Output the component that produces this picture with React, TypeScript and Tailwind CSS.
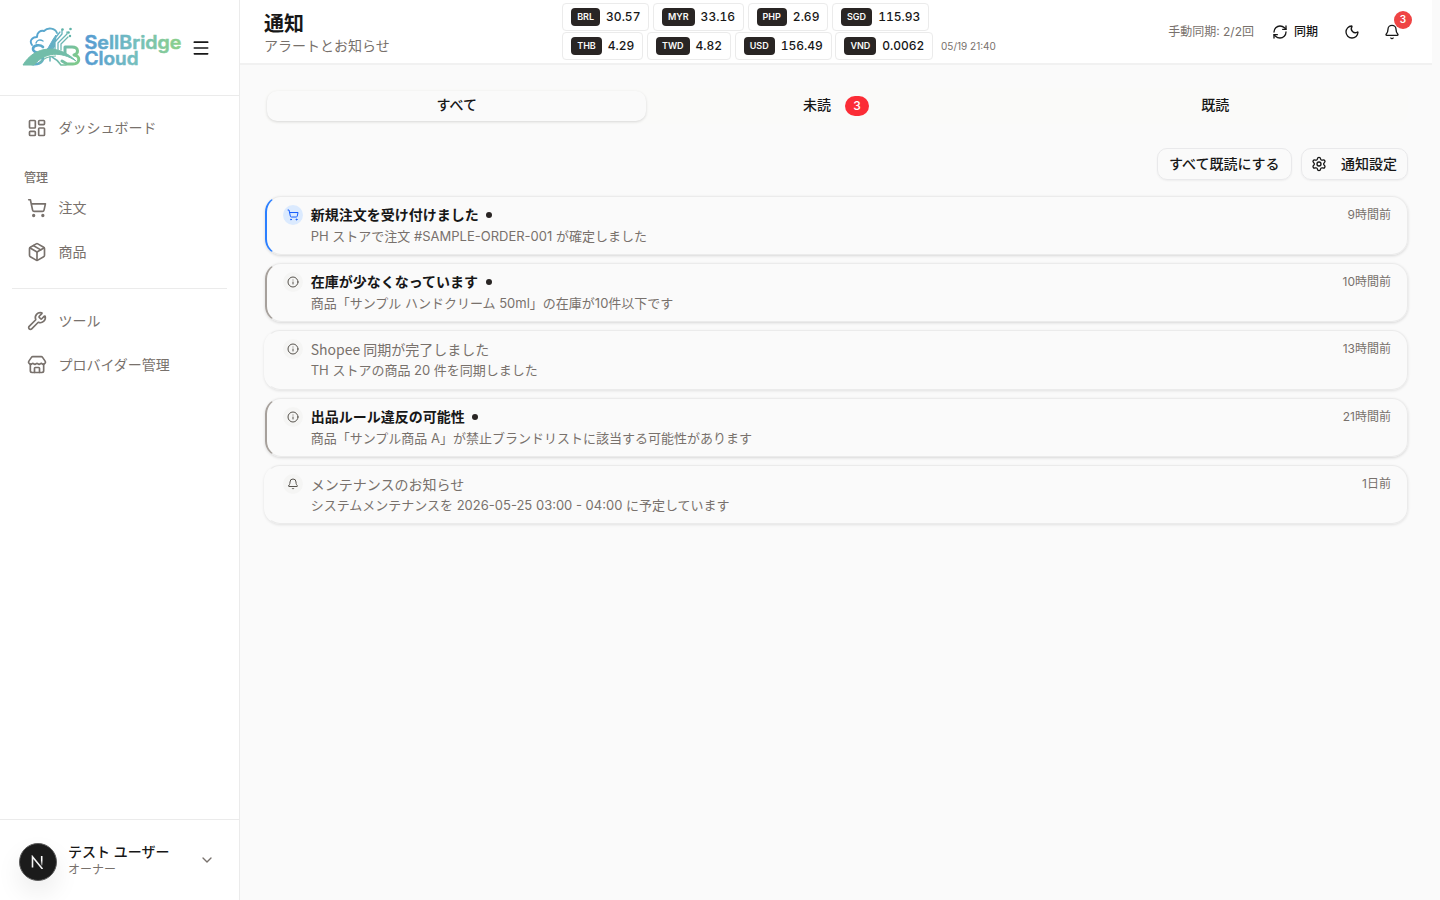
import {
  Bell,
  ChevronDown,
  Info,
  LayoutDashboard,
  Menu,
  Moon,
  Package,
  RefreshCw,
  Settings,
  ShoppingCart,
  Store,
  Wrench,
  type LucideIcon,
} from "lucide-react";

const rateRows = [
  [
    ["BRL", "30.57"],
    ["MYR", "33.16"],
    ["PHP", "2.69"],
    ["SGD", "115.93"],
  ],
  [
    ["THB", "4.29"],
    ["TWD", "4.82"],
    ["USD", "156.49"],
    ["VND", "0.0062"],
  ],
];

type Notice = {
  title: string;
  body: string;
  time: string;
  unread: boolean;
  kind: "order" | "info" | "system";
};

const notices: Notice[] = [
  { title: "新規注文を受け付けました", body: "PH ストアで注文 #SAMPLE-ORDER-001 が確定しました", time: "9時間前", unread: true, kind: "order" },
  { title: "在庫が少なくなっています", body: "商品「サンプル ハンドクリーム 50ml」の在庫が10件以下です", time: "10時間前", unread: true, kind: "info" },
  { title: "Shopee 同期が完了しました", body: "TH ストアの商品 20 件を同期しました", time: "13時間前", unread: false, kind: "info" },
  { title: "出品ルール違反の可能性", body: "商品「サンプル商品 A」が禁止ブランドリストに該当する可能性があります", time: "21時間前", unread: true, kind: "info" },
  { title: "メンテナンスのお知らせ", body: "システムメンテナンスを 2026-05-25 03:00 - 04:00 に予定しています", time: "1日前", unread: false, kind: "system" },
];

const icons: Record<Notice["kind"], LucideIcon> = {
  order: ShoppingCart,
  info: Info,
  system: Bell,
};

const Logo = () => (
  <svg width="160" height="42" viewBox="0 0 160 42" fill="none" aria-label="SellBridge Cloud" className="shrink-0">
    <defs>
      <linearGradient id="mark" x1="6" y1="0" x2="58" y2="24" gradientUnits="userSpaceOnUse">
        <stop stopColor="#4f9fd6" />
        <stop offset="0.5" stopColor="#62aec6" />
        <stop offset="1" stopColor="#7fc98c" />
      </linearGradient>
      <linearGradient id="word" x1="62" y1="0" x2="159" y2="0" gradientUnits="userSpaceOnUse">
        <stop stopColor="#5399d2" />
        <stop offset="0.5" stopColor="#73bdc0" />
        <stop offset="1" stopColor="#8bd088" />
      </linearGradient>
    </defs>
    <g stroke="url(#mark)" strokeLinecap="round" strokeLinejoin="round">
      <path d="M10 18c-3-4 0-8 5-8 0-5 4-7 7-6 4-4 11-3 13 2" strokeWidth="1.9" />
      <path d="M14 16c1-3 4-4 7-2" strokeWidth="1.4" />
      <path d="M21 20c-3-3-10-2-10 2 0 5 10 3 10 9 0 5-6 7-11 6" strokeWidth="2.6" />
      <path d="M24 24c4-5 6-11 10-16l-4 16z" fill="url(#mark)" strokeWidth="1" />
      <path d="M33 23v-8l7-8V3M36 23v-7l9-9V5M39 23v-6l7-7M31 22l3-12 4-5" strokeWidth="1.3" />
      <path d="M43 26v-6h7c7 0 7 7 2 8 7 1 6 9-1 9h-6l-5-3" strokeWidth="3" />
      <path d="M30 30c4 2 7 5 9 8h5M28 30v4" strokeWidth="1.5" />
    </g>
    <path d="M1 38C13 18 37 17 54 34c-15-10-31-9-42 4z" fill="#72bda9" stroke="#72bda9" strokeLinejoin="round" />
    <path d="M17 37c4-6 10-8 17-8" stroke="#72bda9" strokeWidth="1.2" />
    <g fill="#5fb3a8">
      <circle cx="40.5" cy="2.5" r="1.3" />
      <circle cx="48.5" cy="2" r="1.3" />
      <circle cx="46.5" cy="5.5" r="1.3" />
      <circle cx="48" cy="9" r="1.2" />
    </g>
    <g
      fill="url(#word)"
      stroke="url(#word)"
      strokeWidth="0.5"
      fontFamily="Inter, 'Liberation Sans', sans-serif"
      fontWeight="600"
      fontSize="18"
    >
      <text x="62.5" y="21.6" textLength="97" lengthAdjust="spacingAndGlyphs">SellBridge</text>
      <text x="62.5" y="38" textLength="54" lengthAdjust="spacingAndGlyphs">Cloud</text>
    </g>
  </svg>
);

const NavItem = ({ icon: Icon, label }: { icon: LucideIcon; label: string }) => (
  <a href="#" className="flex h-10 items-center gap-[11.4px] rounded-lg px-[15px] text-sm text-[#78716c]">
    <Icon size={20} strokeWidth={2} />
    <span>{label}</span>
  </a>
);

const Sidebar = () => (
  <aside className="flex w-60 shrink-0 flex-col border-r border-[#ebebeb] bg-white">
    <div className="flex h-24 items-center justify-between border-b border-[#ebebeb] pr-7 pl-[22px]">
      <Logo />
      <Menu size={20} strokeWidth={2} className="shrink-0" />
    </div>
    <nav className="flex-1 px-3 pt-3">
      <NavItem icon={LayoutDashboard} label="ダッシュボード" />
      <div className="mt-5 flex h-5 items-center px-3 text-xs font-medium text-[#78716c]">管理</div>
      <div className="flex flex-col gap-1">
        <NavItem icon={ShoppingCart} label="注文" />
        <NavItem icon={Package} label="商品" />
      </div>
      <div className="my-3 mt-4 border-t border-[#ebebeb]" />
      <div className="flex flex-col gap-1">
        <NavItem icon={Wrench} label="ツール" />
        <NavItem icon={Store} label="プロバイダー管理" />
      </div>
    </nav>
    <div className="flex h-[81px] items-center border-t border-[#ebebeb] pt-1 pr-6 pl-[19px]">
      <div className="flex size-[38px] items-center justify-center rounded-full border border-[#5c5c5c] bg-[#1b1b1b] shadow-[0_12px_26px_rgba(0,0,0,0.08)]">
        <svg width="14" height="14" viewBox="0 0 14 14" fill="none" strokeWidth="1.6">
          <defs>
            <linearGradient id="fade" x1="0" y1="1" x2="0" y2="12" gradientUnits="userSpaceOnUse">
              <stop offset="0.4" stopColor="#fff" />
              <stop offset="1" stopColor="#fff" stopOpacity="0.1" />
            </linearGradient>
          </defs>
          <path d="M1.5 12.5V1.8L11.5 14" stroke="#f5f5f5" />
          <path d="M10.7 1v9.5" stroke="url(#fade)" />
        </svg>
      </div>
      <div className="mb-[3px] ml-[11px] flex-1">
        <div className="text-sm leading-[17px] font-medium">テスト ユーザー</div>
        <div className="pt-0.5 text-xs leading-4 text-[#78716c]">オーナー</div>
      </div>
      <ChevronDown size={16} className="mb-1 text-[#78716c]" />
    </div>
  </aside>
);

const Rates = () => (
  <div className="flex flex-col gap-[1.5px]">
    {rateRows.map((row, i) => (
      <div key={i} className="flex items-center gap-[3.6px]">
        {row.map(([code, value]) => (
          <div key={code} className="flex h-[27.5px] items-center gap-1.5 rounded border border-[#ebebeb] px-2">
            <span className="flex h-[18px] items-center rounded bg-[#292524] px-1.5 text-[9px] font-semibold text-[#fafaf9]">
              {code}
            </span>
            <span className="text-xs font-medium tabular-nums">{value}</span>
          </div>
        ))}
        {i === 1 && <span className="ml-1 text-[10px] text-[#78716c]">05/19 21:40</span>}
      </div>
    ))}
  </div>
);

const Header = () => (
  <header className="mr-2 flex h-[65px] items-center justify-between border-b-2 border-[#f1f1f1] bg-white pr-6 pl-6">
    <div className="w-[298.2px] pt-[5px]">
      <h1 className="text-xl leading-6 font-semibold">通知</h1>
      <p className="text-sm leading-5 text-[#78716c]">アラートとお知らせ</p>
    </div>
    <Rates />
    <div className="ml-auto flex items-center text-xs">
      <span className="text-[#78716c]">手動同期: 2/2回</span>
      <button className="ml-[18px] flex items-center gap-1.5 font-medium">
        <RefreshCw size={16} />
        同期
      </button>
      <Moon size={16} className="ml-[26px]" />
      <div className="relative mr-2 ml-6">
        <Bell size={16} />
        <span className="absolute -top-[13px] left-[10px] flex size-[18px] items-center justify-center rounded-full bg-[#ef4444] text-[10px] font-semibold text-white">
          3
        </span>
      </div>
    </div>
  </header>
);

const NoticeCard = ({ notice }: { notice: Notice }) => {
  const Icon = icons[notice.kind];
  const isOrder = notice.kind === "order";
  const edge = !notice.unread ? "border-l-transparent" : isOrder ? "border-l-[#2b7fff]" : "border-l-[#a6a09b]";
  return (
    <article
      className={`flex h-[59.2px] items-start gap-2 rounded-2xl border border-l-2 border-[#ebebeb] pt-2 pr-4 ${edge} ${
        notice.unread
          ? "ml-px pl-[15.7px] shadow-[0_1px_3px_rgba(0,0,0,0.14)]"
          : "pl-[16.7px] shadow-[0_1px_3px_rgba(0,0,0,0.1)]"
      }`}
    >
      <span
        className={`flex size-5 shrink-0 items-center justify-center rounded-full ${
          isOrder ? "bg-[#dbeafe] text-[#155dfc]" : "bg-[#f5f5f4] text-[#57534d]"
        }`}
      >
        <Icon size={12} />
      </span>
      <div className="flex-1">
        <div className="flex h-[21px] items-start gap-[7.5px]">
          <h3
            className={`font-['Noto_Sans_CJK_JP',sans-serif] text-sm ${
              notice.unread ? "leading-[19.6px] font-semibold" : "leading-[20.6px] text-[#78716c]"
            }`}
          >
            {notice.title}
          </h3>
          {notice.unread && <span className="mt-[7px] size-1.5 rounded-full bg-[#292524]" />}
        </div>
        <p className="text-[13px] leading-[21px] text-[#78716c]">{notice.body}</p>
      </div>
      <time className="text-xs leading-5 text-[#78716c]">{notice.time}</time>
    </article>
  );
};

const App = () => {
  return (
    <div className="flex h-screen overflow-hidden bg-[#fafafa] font-['Inter','Noto_Sans_CJK_JP',sans-serif] text-[#171717]">
      <Sidebar />
      <div className="flex min-w-0 flex-1 flex-col">
        <Header />
        <main className="mr-2 flex-1 px-6 pt-[23px]">
          <div className="grid h-9 grid-cols-3 rounded-xl bg-[#fafaf9] p-[3px] text-sm font-medium">
            <button className="rounded-[10px] bg-[#fafafa] pb-0.5 shadow-[0_1px_3px_rgba(0,0,0,0.14)]">すべて</button>
            <button className="flex items-center justify-center gap-3.5">
              <span className="pb-0.5">未読</span>
              <span className="flex h-5 w-6 items-center justify-center rounded-full bg-[#fb2c36] text-xs text-white">3</span>
            </button>
            <button className="pb-0.5">既読</button>
          </div>

          <div className="mt-6 flex justify-end gap-[8.6px] text-sm font-medium">
            <button className="h-8 rounded-[10px] border border-[#e9e9eb] px-[11.3px] shadow-[0_1px_2px_rgba(0,0,0,0.05)]">
              すべて既読にする
            </button>
            <button className="flex h-8 items-center gap-3.5 rounded-[10px] border border-[#e9e9eb] pr-2.5 pl-[9.5px] shadow-[0_1px_2px_rgba(0,0,0,0.05)]">
              <Settings size={16} />
              通知設定
            </button>
          </div>

          <div className="mt-4 flex flex-col gap-2">
            {notices.map((notice) => (
              <NoticeCard key={notice.title} notice={notice} />
            ))}
          </div>
        </main>
      </div>
    </div>
  );
};

export default App;
